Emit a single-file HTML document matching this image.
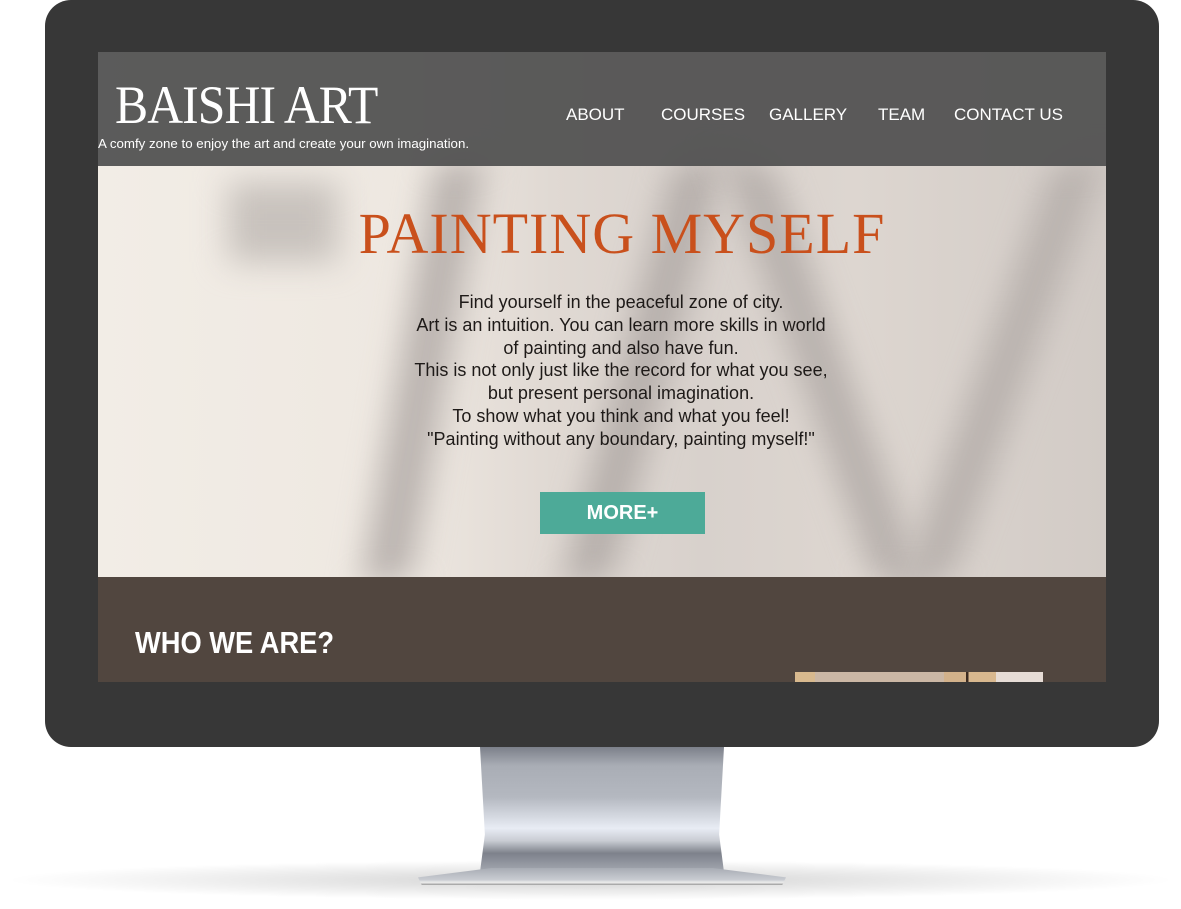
<!DOCTYPE html>
<html><head><style>
*{margin:0;padding:0;box-sizing:border-box}
body{width:1181px;height:909px;background:#fff;position:relative;overflow:hidden;font-family:"Liberation Sans",sans-serif}
.mon{position:absolute;left:45px;top:0;width:1114px;height:747px;background:#373737;border-radius:26px}
.screen{position:absolute;left:98px;top:52px;width:1008px;height:630px;overflow:hidden;background:#e9e3dc}
.hero{position:absolute;left:0;top:0;width:1008px;height:525px;background:linear-gradient(90deg,#f2ede6 0%,#eee8e1 30%,#e0d9d3 45%,#d8d1cc 60%,#ddd6d0 75%,#d2cbc6 100%)}
.blur{position:absolute;filter:blur(16px)}
.hdr{position:absolute;left:0;top:0;width:1008px;height:114px;background:rgba(80,80,80,.93)}
.logo{position:absolute;left:17px;top:22px;font-family:"Liberation Serif",serif;font-size:54px;color:#fff;letter-spacing:-1px;transform:scaleX(.92);transform-origin:left}
.tag{position:absolute;left:0;top:84px;font-size:13.3px;color:#fff}
.nav{position:absolute;top:53px;font-size:17px;color:#fff}
.title{position:absolute;left:20px;width:1008px;top:148px;text-align:center;font-family:"Liberation Serif",serif;font-size:58px;color:#c9501c;letter-spacing:1px}
.txt{position:absolute;left:0;width:1046px;top:239px;text-align:center;font-size:18px;line-height:22.8px;color:#1e1a18}
.btn{position:absolute;left:442px;top:440px;width:165px;height:42px;background:#4daa98;color:#fff;font-weight:bold;font-size:20px;text-align:center;line-height:42px}
.brown{position:absolute;left:0;top:525px;width:1008px;height:105px;background:#51463f}
.who{position:absolute;left:37px;top:48px;font-size:31px;font-weight:bold;color:#fff;transform:scaleX(.88);transform-origin:left}
.img{position:absolute;left:697px;top:95px;width:248px;height:10px;background:linear-gradient(90deg,#d8b98e 0 8%,#cbb7a5 8% 60%,#d2b18a 60% 69%,#3a2a20 69% 70%,#d8b88f 70% 81%,#e6dcd6 81%)}
.neck{position:absolute;left:480px;top:747px;width:244px;height:125px;background:linear-gradient(180deg,#7c808a 0%,#a9adb5 15%,#b4b8c0 40%,#e8ecf4 65%,#c9ccd3 75%,#7d818b 85%,#a5a9b1 100%);clip-path:polygon(0 0,100% 0,98% 70%,100% 100%,0 100%,2% 70%)}
.foot{position:absolute;left:418px;top:868px;width:368px;height:17px;background:linear-gradient(180deg,#a8acb4,#c9ccd2 70%,#eee 85%,#999 100%);clip-path:polygon(20% 0,80% 0,100% 55%,99% 100%,1% 100%,0 55%)}
.shadow{position:absolute;left:0;top:860px;width:1181px;height:40px;background:radial-gradient(ellipse at center,rgba(0,0,0,.18),rgba(0,0,0,0) 70%)}
</style></head><body>
<div class="shadow"></div>
<div class="mon"></div>
<div class="screen">
 <div class="hero">
  <div class="blur" style="left:130px;top:130px;width:110px;height:80px;background:#c8c2bd"></div>
  <div class="blur" style="left:300px;top:110px;width:50px;height:420px;background:#bbb4b0;transform:skewX(-10deg)"></div>
  <div class="blur" style="left:520px;top:110px;width:50px;height:420px;background:#b7b0ac;transform:skewX(-15deg)"></div>
  <div class="blur" style="left:700px;top:110px;width:50px;height:420px;background:#b9b2ae;transform:skewX(20deg)"></div>
  <div class="blur" style="left:880px;top:110px;width:50px;height:420px;background:#bab3af;transform:skewX(-20deg)"></div>
 </div>
 <div class="hdr">
  <div class="logo">BAISHI ART</div>
  <div class="tag">A comfy zone to enjoy the art and create your own imagination.</div>
  <div class="nav" style="left:468px">ABOUT</div>
  <div class="nav" style="left:563px">COURSES</div>
  <div class="nav" style="left:671px">GALLERY</div>
  <div class="nav" style="left:780px">TEAM</div>
  <div class="nav" style="left:856px">CONTACT US</div>
 </div>
 <div class="title">PAINTING MYSELF</div>
 <div class="txt">Find yourself in the peaceful zone of city.<br>Art is an intuition. You can learn more skills in world<br>of painting and also have fun.<br>This is not only just like the record for what you see,<br>but present personal imagination.<br>To show what you think and what you feel!<br>"Painting without any boundary, painting myself!"</div>
 <div class="btn">MORE+</div>
 <div class="brown"><div class="who">WHO WE ARE?</div><div class="img"></div></div>
</div>
<div class="neck"></div>
<div class="foot"></div>
</body></html>
